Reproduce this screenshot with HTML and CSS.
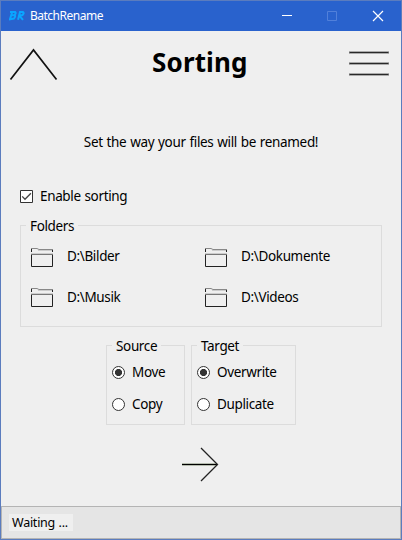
FILE: index.html
```
<!DOCTYPE html>
<html lang="en">
<head>
<meta charset="utf-8">
<title>BatchRename</title>
<link rel="stylesheet" href="styles.css">
</head>
<body>
<svg width="0" height="0" class="defs">
  <symbol id="folder" viewBox="0 0 24 22">
    <path d="M1.5 5V1.5M22.5 5V2" stroke="#222" fill="none"/>
    <path d="M1 1.5H7L9 2.5H23" stroke="#888" fill="none"/>
    <path d="M8 3.5H22" stroke="#ccc" fill="none"/>
    <path d="M1.5 7V19.5H22.5V7" stroke="#222" fill="none"/>
    <path d="M1 6.5H23" stroke="#ccc" fill="none"/>
    <path d="M1 7.5H23" stroke="#777" fill="none"/>
  </symbol>
</svg>
<div class="window">
  <header class="titlebar">
    <svg class="logo" width="16" height="12" viewBox="0 0 16 12" fill="none" stroke="#0aa5ff" stroke-width="2"><path d="M1 2H6.2Q7.500 3 5.500 5L3 5.200M5.500 5Q7 6 5 8.500L1 9.200L3.200 2M9 9.800L11 2H14Q15.500 3 13.500 5L10.500 5.800L14 9.800"/></svg>
    <span class="app-name">BatchRename</span>
    <svg class="controls" width="104" height="12" viewBox="0 0 104 12" fill="none"><path d="M1 5.500H11" stroke="#fff"/><path d="M46.500 1.500H55.500V10.500H46.500Z" stroke="#5180da"/><path d="M92 1L102 11M102 1L92 11" stroke="#fff" stroke-width="1.200"/></svg>
  </header>
  <div class="heading">
    <svg width="50" height="34" viewBox="0 0 50 34" fill="none" stroke="#111" stroke-width="1.700"><path d="M1.500 31.500L24.500 2L47.500 31.500"/></svg>
    <h1>Sorting</h1>
    <svg class="menu" width="42" height="28" viewBox="0 0 42 28" fill="none"><path d="M1 3.500H41M1 14.500H41M1 25.500H41" stroke="#aaa" stroke-width="3"/><path d="M1.500 3.500H40.500M1.500 14.500H40.500M1.500 25.500H40.500" stroke="#282828"/></svg>
  </div>
  <p class="intro"><span>Set the way your files will be renamed!</span></p>
  <div class="enable">
    <svg width="13" height="13" viewBox="0 0 13 13"><path d="M.5 .5H12.500V12.500H.5Z" fill="#fff" stroke="#333"/><path d="M2.200 6.400L5 9.300L10.900 3.300" fill="none" stroke="#444" stroke-width="1.300"/></svg>
    <span>Enable sorting</span>
  </div>
  <section class="group folders">
    <h2>Folders</h2>
    <div class="folder-grid">
      <div class="folder"><svg width="24" height="22"><use href="#folder"/></svg><span>D:\Bilder</span></div>
      <div class="folder"><svg width="24" height="22"><use href="#folder"/></svg><span>D:\Dokumente</span></div>
      <div class="folder lower"><svg width="24" height="22"><use href="#folder"/></svg><span>D:\Musik</span></div>
      <div class="folder lower"><svg width="24" height="22"><use href="#folder"/></svg><span>D:\Videos</span></div>
    </div>
  </section>
  <div class="options">
    <section class="group source">
      <h2>Source</h2>
      <div class="radio"><i class="dot on"></i><span>Move</span></div>
      <div class="radio"><i class="dot"></i><span>Copy</span></div>
    </section>
    <section class="group target">
      <h2>Target</h2>
      <div class="radio"><i class="dot on"></i><span>Overwrite</span></div>
      <div class="radio"><i class="dot"></i><span>Duplicate</span></div>
    </section>
  </div>
  <div class="next"><svg width="40" height="36" viewBox="0 0 40 36" fill="none"><path d="M2 17.500H37" stroke="#b4bbae" stroke-width="3"/><path d="M2 17.500H38" stroke="#000" stroke-width="1.200"/><path d="M21 1L37.500 17.500L21 34" stroke="#222" stroke-width="1.300"/></svg></div>
  <footer class="status"><span>Waiting ...</span></footer>
</div>
</body>
</html>
```
FILE: styles.css
```
* { box-sizing: border-box; }
body { margin: 0; font: 13.5px/20px "Noto Sans", "Open Sans", sans-serif; letter-spacing: -0.35px; word-spacing: 0.6px; color: #000; }
.defs { display: block; position: absolute; }
svg { display: block; flex: none; }
span { white-space: nowrap; }
.window { width: 402px; height: 540px; border: 1px solid #5b7cbe; background: #efefef; display: flex; flex-direction: column; overflow: hidden; }
.titlebar { height: 30px; flex: none; background: #2962cd; display: flex; align-items: center; padding: 0 16px 0 8px; color: #fff; font-size: 12px; letter-spacing: -0.5px; }
.app-name { margin-left: 5px; }
.controls { margin-left: auto; }
.heading { height: 64px; flex: none; display: flex; align-items: center; padding: 3px 11px 0 8px; }
h1 { margin: 0 0 0 93px; font-size: 26px; line-height: 36px; font-weight: 700; letter-spacing: 0.15px; padding-bottom: 6px; }
.menu { margin: 0 0 4px auto; }
.intro { margin: 37px 0 0; height: 20px; text-align: center; letter-spacing: -0.33px; }
.enable { margin: 34px 0 0 19px; height: 20px; display: flex; align-items: center; gap: 7px; }
.group { border: 1px solid #dcdcdc; flex: none; }
h2 { margin: -10px 0 0 5px; padding: 0 4px; width: max-content; background: #efefef; font-size: 13.5px; line-height: 20px; font-weight: 400; }
.folders { margin: 19px 19px 0; height: 102px; }
.folder-grid { display: grid; grid-template-columns: 174px 174px; grid-template-rows: 41px 41px; padding: 0 0 0 9px; }
.folder { display: flex; align-items: center; gap: 13px; }
.folder svg { margin-top: 2px; }
.folder.lower svg { margin-top: 0; }
.folder span { padding-bottom: 2px; }
.options { display: flex; gap: 6px; margin: 18px 0 0 105px; height: 80px; flex: none; }
.source { width: 79px; height: 80px; }
.target { width: 105px; height: 80px; }
.radio { height: 32px; display: flex; align-items: center; gap: 7px; padding-left: 5px; }
.dot { width: 13px; height: 13px; border: 1px solid #333; border-radius: 50%; background: #fff; flex: none; }
.dot.on { background: radial-gradient(circle, #333 0 3.2px, #fff 3.900px); }
.next { margin: 22px 0 0 179px; height: 36px; }
.status { margin-top: auto; height: 33px; flex: none; background: #e5e5e5; border: 1px solid #b4b4b4; display: flex; align-items: center; padding-left: 7px; font-size: 12.5px; letter-spacing: -0.25px; }
.status span { background: #efefef; line-height: 17px; padding: 0 3px; width: 64px; }
```
